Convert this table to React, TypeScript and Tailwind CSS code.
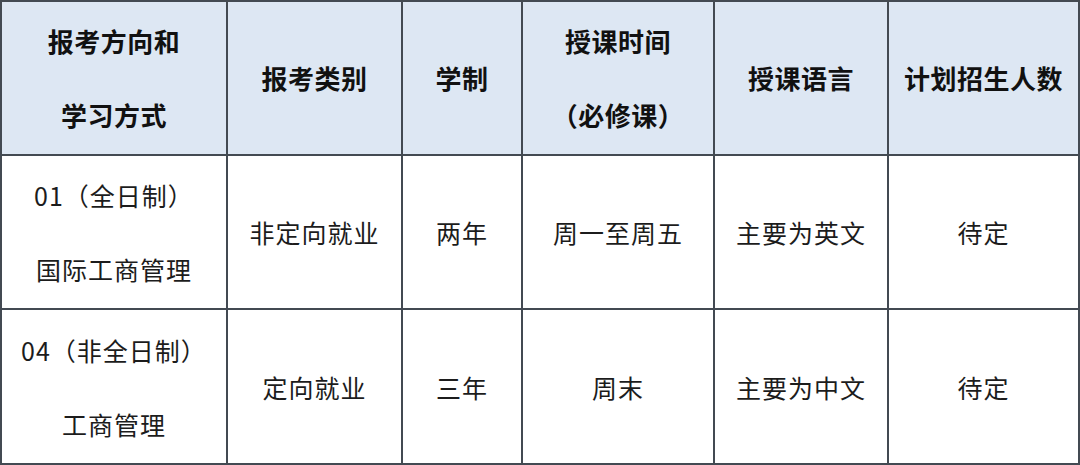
import React from "react";

const cols = "grid-cols-[226px_175px_120px_192px_174px_191px]";

function Cell({ children, header }: { children: React.ReactNode; header?: boolean }) {
  return (
    <div
      className={`flex flex-col items-center justify-center border-r-2 border-b-2 border-[#434a52] text-center leading-[74px] ${
        header
          ? "bg-[#dde7f3] font-bold text-[#111] text-[26px] tracking-[0.5px]"
          : "bg-white text-[#1c1c1c] text-[25px] tracking-[1px]"
      }`}
    >
      {children}
    </div>
  );
}

export default function App() {
  const font = { fontFamily: '"Noto Sans CJK SC", "Noto Sans", sans-serif' };
  return (
    <div className="w-[1080px] h-[465px] bg-white" style={font}>
      <div className={`grid ${cols} grid-rows-[154px_154px_155px] w-[1080px] border-l-2 border-t-2 border-[#434a52]`}>
        <Cell header>
          <span>报考方向和</span>
          <span>学习方式</span>
        </Cell>
        <Cell header>报考类别</Cell>
        <Cell header>学制</Cell>
        <Cell header>
          <span>授课时间</span>
          <span>（必修课）</span>
        </Cell>
        <Cell header>授课语言</Cell>
        <Cell header>计划招生人数</Cell>

        <Cell>
          <span>01（全日制）</span>
          <span>国际工商管理</span>
        </Cell>
        <Cell>非定向就业</Cell>
        <Cell>两年</Cell>
        <Cell>周一至周五</Cell>
        <Cell>主要为英文</Cell>
        <Cell>待定</Cell>

        <Cell>
          <span>04（非全日制）</span>
          <span>工商管理</span>
        </Cell>
        <Cell>定向就业</Cell>
        <Cell>三年</Cell>
        <Cell>周末</Cell>
        <Cell>主要为中文</Cell>
        <Cell>待定</Cell>
      </div>
    </div>
  );
}
